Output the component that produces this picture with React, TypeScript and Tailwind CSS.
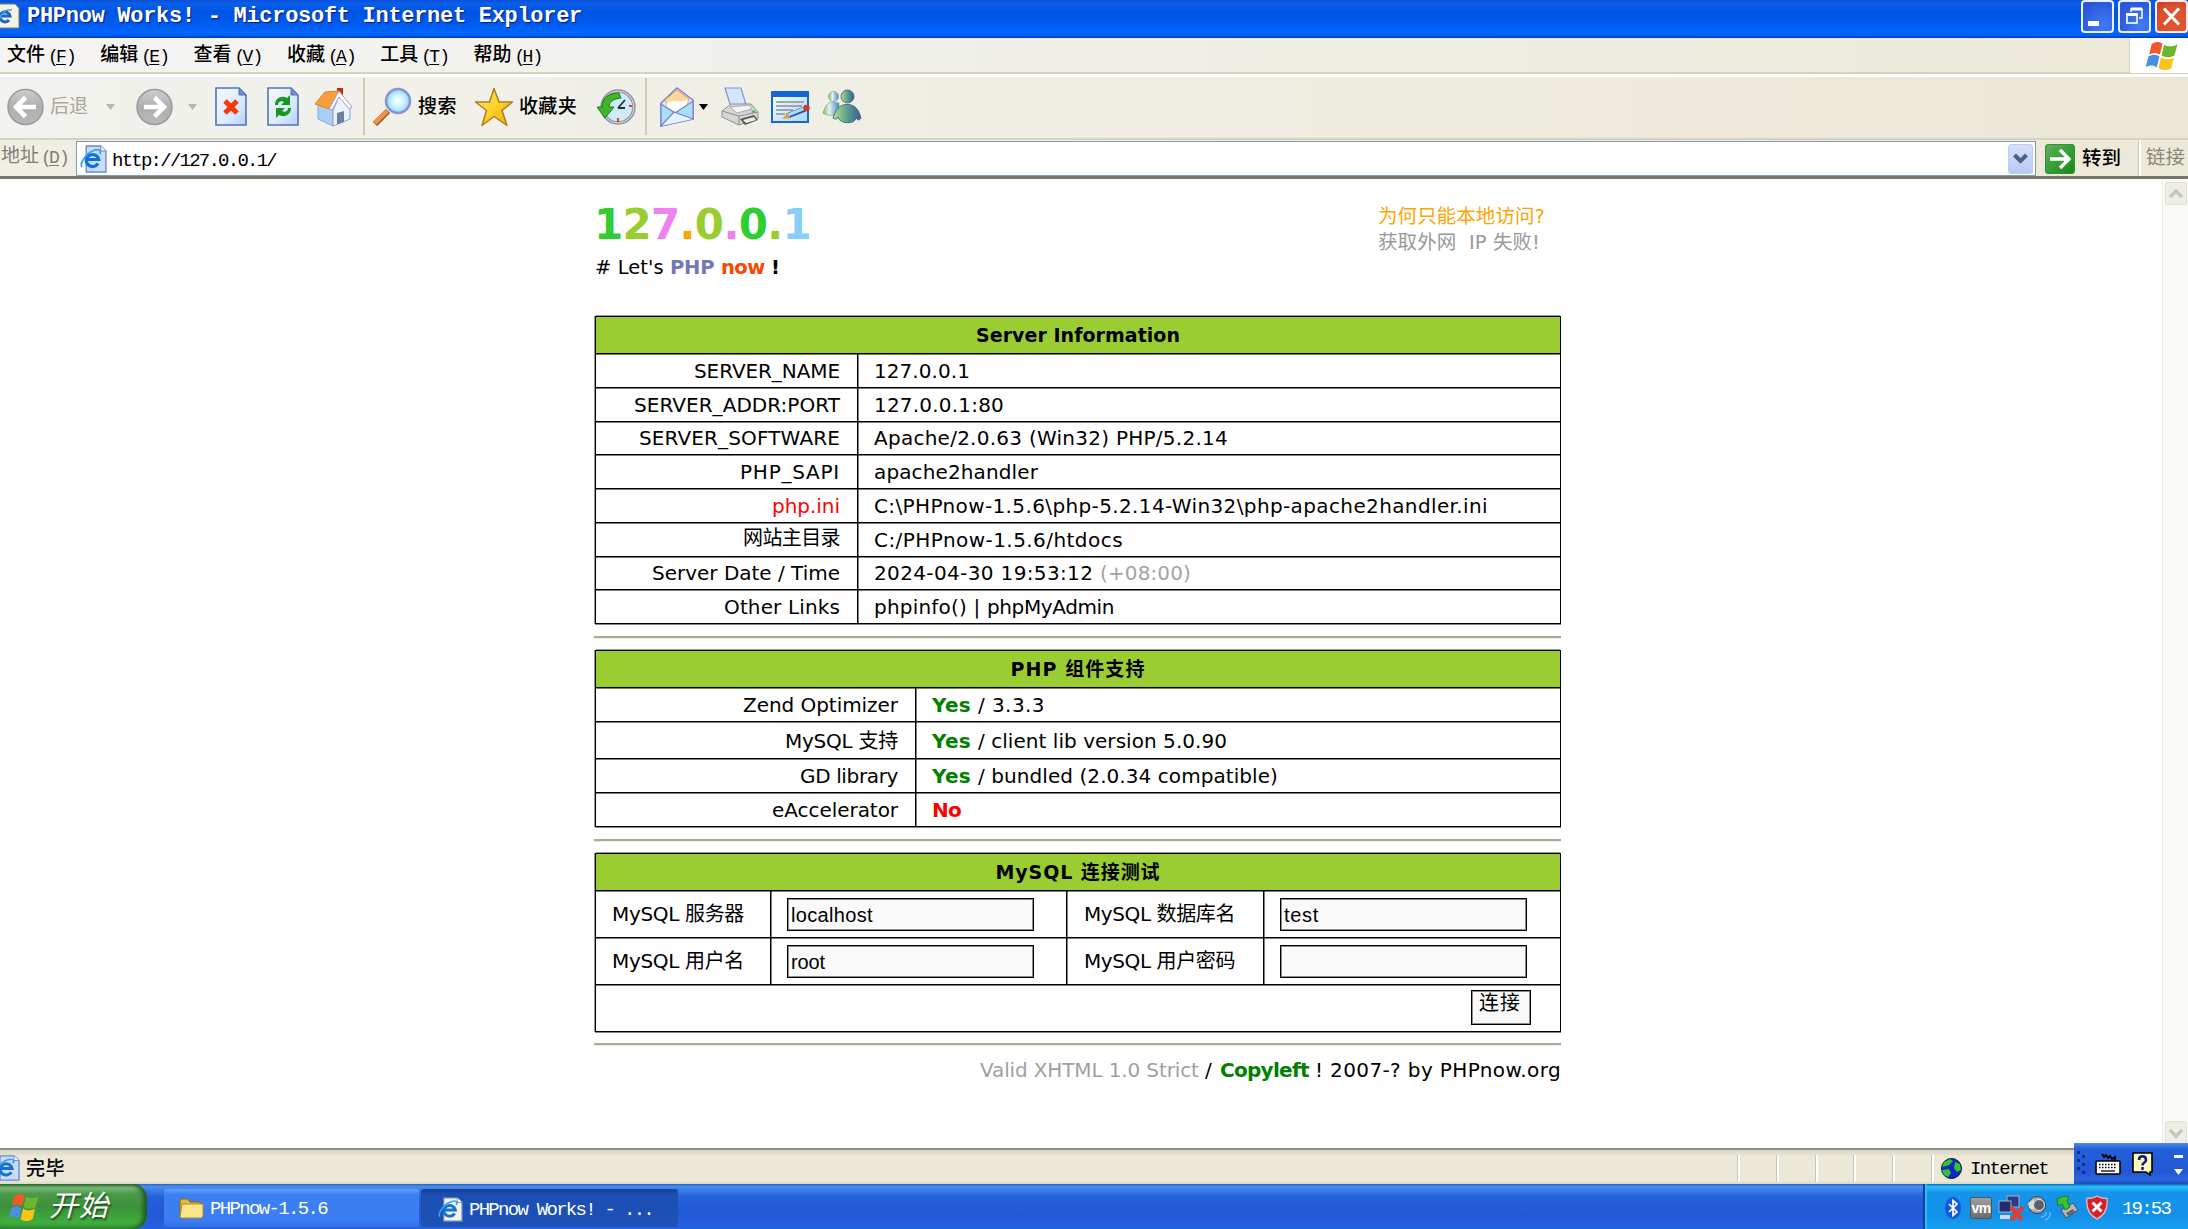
import React, { useLayoutEffect, useRef } from "react";

const SANS = "font-['DejaVu_Sans','Noto_Sans_CJK_SC',sans-serif]";
const MONO = "font-['Liberation_Mono','Noto_Sans_CJK_SC',monospace]";

/** Inline text tracked so that it fills exactly `w` pixels. */
function T({ w, className = "", children }: { w: number; className?: string; children: React.ReactNode }) {
  const ref = useRef<HTMLSpanElement>(null);
  useLayoutEffect(() => {
    const el = ref.current;
    if (!el) return;
    el.style.letterSpacing = "0px";
    const n = (el.textContent || "").length || 1;
    el.style.letterSpacing = `${(w - el.getBoundingClientRect().width) / n}px`;
  }, [w]);
  return (
    <span ref={ref} className={`inline-block whitespace-pre leading-none shrink-0 ${className}`}>
      {children}
    </span>
  );
}

const Flag = ({ className }: { className: string }) => (
  <svg className={className} viewBox="0 0 32 28" preserveAspectRatio="none">
    <path d="M6.5 3C10 0 14 .5 17 2.500L14.500 13C11 11 7.500 11 4 13Z" fill="#f0592a" />
    <path d="M18.500 3.500C22 5.500 27 6 31.500 3.200L28.500 14C24.500 16.500 20 16 16 14Z" fill="#6cb52d" />
    <path d="M3.500 14.800C7 12.500 11 12.800 14 14.800L11.500 25.500C8 23 4 23 .5 25Z" fill="#4a90e0" />
    <path d="M15.500 15.600C19 18 24 18.300 28 15.600L25.500 26C21.500 29 17 28.500 13 26.200Z" fill="#fbc21a" />
  </svg>
);

const IE = ({ className, page = "#c9dcfb" }: { className: string; page?: string }) => (
  <svg className={className} viewBox="0 0 26 28" preserveAspectRatio="none">
    <path d="M6 1H20L25 6V27H6Z" fill={page} stroke="#6f86c4" strokeWidth="1.3" />
    <path d="M20 1V6H25" fill="#fff" stroke="#6f86c4" />
    <path d="M17.300 18.500A6 6 0 1 1 18 14.500H7" fill="none" stroke="#1272d8" strokeWidth="3.200" />
    <path d="M2 22C-1 19 6 8 13 5.500C18 3.500 21 5 19 9" fill="none" stroke="#3aa0ee" strokeWidth="1.700" />
  </svg>
);

function TitleBar() {
  const box = "w-[33px] h-[33px] rounded-[4px] border-2 border-white/90 flex items-center justify-center";
  return (
    <div className="h-[38px] shrink-0 flex items-start bg-[linear-gradient(180deg,#0a50d8_0%,#0a5fe8_10%,#0054e3_30%,#0058ea_55%,#0066ff_85%,#0060f4_93%,#0036c0_100%)]">
      <svg className="w-[20px] h-[26px] mt-[3px]" viewBox="0 0 20 26">
        <path d="M-2 1H15L19 5V25H-2Z" fill="#f4f2e6" stroke="#7b7a6c" />
        <path d="M9 17A5 5 0 1 1 10 13H1" fill="none" stroke="#1e62c8" strokeWidth="3" />
        <path d="M-1 18C1 10 6 6 12 7" fill="none" stroke="#48a8e8" strokeWidth="1.500" />
      </svg>
      <div className={`${MONO} text-white font-bold text-[22px] leading-none ml-[7px] mt-[6px] [text-shadow:1px_1px_1px_#0a1883]`}>
        <T w={555}>PHPnow Works! - Microsoft Internet Explorer</T>
      </div>
      <div className="ml-auto flex gap-[4px]">
        <div className={`${box} bg-[radial-gradient(circle_at_70%_80%,#3f7cf8,#2a56d8_80%)]`}>
          <div className="w-[11px] h-[5px] bg-white mt-[13px] -ml-[8px]" />
        </div>
        <div className={`${box} bg-[radial-gradient(circle_at_70%_80%,#3f7cf8,#2a56d8_80%)]`}>
          <svg className="w-[19px] h-[19px]" viewBox="0 0 19 19" fill="none" stroke="#fff">
            <path d="M6 5V2H17V11H14" strokeWidth="1.500" />
            <path d="M6 2H17" strokeWidth="3" />
            <rect x="2" y="7" width="10" height="9" strokeWidth="1.600" />
            <path d="M1.200 7.500H12.800" strokeWidth="3" />
          </svg>
        </div>
        <div className={`${box} bg-[radial-gradient(circle_at_70%_80%,#e2552c,#dd5030_60%,#c8401c)]`}>
          <svg className="w-[19px] h-[19px]" viewBox="0 0 19 19" stroke="#fff" strokeWidth="3">
            <path d="M2 1.500L17 17.500M17 1.500L2 17.500" />
          </svg>
        </div>
      </div>
    </div>
  );
}

const MENUS: [string, string][] = [
  ["文件", "F"], ["编辑", "E"], ["查看", "V"], ["收藏", "A"], ["工具", "T"], ["帮助", "H"],
];

function MenuBar() {
  return (
    <div className="h-[39px] shrink-0 flex bg-[linear-gradient(90deg,#f4f4f2_0%,#f1f1ee_30%,#ece9d8_100%)] border-b-[3px] border-white">
      <div className="flex-1 flex items-center pl-[7px] pt-[3px] border-b-2 border-[#d8d2bd] border-r">
        {MENUS.map(([t, k]) => (
          <div key={k} className={`${MONO} w-[93.300px] text-[19px] font-medium text-black flex items-center`}>
            <T w={38}>{t}</T>
            <span className="inline-flex ml-[3px] text-[18px] leading-none">
              <T w={8}>(</T>
              <T w={10} className="underline underline-offset-2">{k}</T>
              <T w={8}>)</T>
            </span>
          </div>
        ))}
      </div>
      <div className="w-[58px] bg-white border-b border-[#d8d2bd] flex items-center pl-[15px]">
        <Flag className="w-[33px] h-[29px]" />
      </div>
    </div>
  );
}

const Circle = ({ flip = false }: { flip?: boolean }) => (
  <svg className={flip ? "w-[37px] h-[38px] shrink-0 -scale-x-100" : "w-[37px] h-[38px] shrink-0"} viewBox="0 0 37 38">
    <defs>
      <linearGradient id="cg" x1="0" y1="0" x2="0" y2="1">
        <stop offset="0" stopColor="#cfcfcf" /><stop offset=".5" stopColor="#aeaeae" /><stop offset="1" stopColor="#b9b9b9" />
      </linearGradient>
    </defs>
    <circle cx="18.500" cy="19" r="17.500" fill="url(#cg)" stroke="#9b9b9b" strokeWidth="1.500" />
    <path d="M29 19H9M18.500 9.500L9 19L18.500 28.500" fill="none" stroke="#fff" strokeWidth="4.600" />
  </svg>
);

const Tri = ({ className, fill }: { className: string; fill: string }) => (
  <svg className={`w-[9px] h-[6px] shrink-0 ${className}`} viewBox="0 0 9 6"><path d="M0 0H9L4.500 6Z" fill={fill} /></svg>
);

const Page = ({ children, className }: { children: React.ReactNode; className: string }) => (
  <svg className={`w-[32px] h-[39px] shrink-0 ${className}`} viewBox="0 0 32 39">
    <defs>
      <linearGradient id="pg" x1="0" y1="0" x2="1" y2="1">
        <stop offset="0" stopColor="#f4f9ff" /><stop offset=".6" stopColor="#dceafd" /><stop offset="1" stopColor="#b4cffa" />
      </linearGradient>
    </defs>
    <path d="M1 1H24L31 8V38H1Z" fill="url(#pg)" stroke="#5672b8" strokeWidth="1.600" />
    <path d="M24 1V8H31Z" fill="#6b8fd4" stroke="#5672b8" />
    {children}
  </svg>
);

function Toolbar() {
  return (
    <div className="h-[63px] shrink-0 flex items-center pl-[7px] pb-[2px] border-b-2 border-[#d8d2bd] bg-[linear-gradient(90deg,#f2f2ee_0%,#f0efe6_35%,#ece8d6_100%)]">
      <Circle />
      <div className={`${SANS} text-[19px] text-[#aaa797] ml-[6px]`}><T w={38}>后退</T></div>
      <Tri className="ml-[18px]" fill="#b9b7a8" />
      <div className="ml-[21px]"><Circle flip /></div>
      <Tri className="ml-[15px]" fill="#b9b7a8" />
      <Page className="ml-[18px]">
        <path d="M10 14L22 26M22 14L10 26" stroke="#f4380c" strokeWidth="5" />
      </Page>
      <Page className="ml-[20px]">
        <path d="M8 18C8 11 15 8 20 11L23 8V18H14L17 15C14 13 11 15 11 18Z" fill="#119a1d" />
        <path d="M24 21C24 28 17 31 12 28L9 31V21H18L15 24C18 26 21 24 21 21Z" fill="#119a1d" />
      </Page>
      <svg className="w-[38px] h-[40px] ml-[15px] shrink-0" viewBox="0 0 38 40">
        <path d="M23 1H29V12L23 8Z" fill="#c22f16" />
        <path d="M4 18L25 6L36 20V32L19 39L4 32Z" fill="#edf4ff" />
        <path d="M4 17L19 23V39L4 32Z" fill="#a8d0f4" stroke="#88a8d4" />
        <path d="M19 24L25 9L36 21V32L19 39Z" fill="#edf4ff" stroke="#8c9ed0" />
        <path d="M23 26L30 24V35L23 37.500Z" fill="#6d7fa8" />
        <path d="M11 5L25 4L15 22L1 17Z" fill="#fa9d3c" stroke="#dd8427" />
        <path d="M25 4L38 20L35 22L25 10L18 23L15 22Z" fill="#fff" stroke="#a8a0c0" />
      </svg>
      <div className="w-[2px] h-[57px] bg-[#cfcab2] ml-[11px] shrink-0" />
      <svg className="w-[39px] h-[39px] ml-[8px] shrink-0" viewBox="0 0 39 39">
        <defs>
          <radialGradient id="lens"><stop offset="0" stopColor="#fff" /><stop offset=".6" stopColor="#c4eefd" /><stop offset="1" stopColor="#8fd0f6" /></radialGradient>
        </defs>
        <path d="M2 37L15 24" stroke="#9c5a34" strokeWidth="6" />
        <path d="M2 36L14 24" stroke="#f2954a" strokeWidth="4" />
        <circle cx="25" cy="14" r="12" fill="url(#lens)" stroke="#8396d2" strokeWidth="2.500" />
      </svg>
      <div className={`${SANS} text-[19px] text-black ml-[6px] font-medium`}><T w={39}>搜索</T></div>
      <svg className="w-[40px] h-[40px] ml-[17px] shrink-0" viewBox="0 0 40 40">
        <defs>
          <linearGradient id="sg" x1="0" y1="0" x2="1" y2="1"><stop offset="0" stopColor="#ffe97a" /><stop offset=".5" stopColor="#fcd32c" /><stop offset="1" stopColor="#f3a70c" /></linearGradient>
        </defs>
        <path d="M20 1.500L25 15H38.500L28 23.500L33 38.500L20 29.500L8 38.500L12.500 23.500L1.500 15H15.500Z" fill="url(#sg)" stroke="#b07d1c" strokeWidth="1.500" strokeLinejoin="round" />
      </svg>
      <div className={`${SANS} text-[19px] text-black ml-[5px] font-medium`}><T w={58}>收藏夹</T></div>
      <svg className="w-[40px] h-[38px] ml-[19px] shrink-0" viewBox="0 0 40 38">
        <circle cx="22" cy="19" r="16" fill="#cfeafb" stroke="#92959c" strokeWidth="3.500" />
        <circle cx="22" cy="19" r="16" fill="none" stroke="#d9dce2" strokeWidth="1" />
        <path d="M22 20L29 12M22 20H29" stroke="#233" strokeWidth="1.800" />
        <path d="M22 30V34M33 18H36" stroke="#e0442c" strokeWidth="2.200" />
        <path d="M23 5C12 5 6 10 6 19H1L9 30L18 19H13C13 14 17 11 25 10Z" fill="#3eb52b" stroke="#1d7d16" />
      </svg>
      <div className="w-[2px] h-[57px] bg-[#cfcab2] ml-[9px] shrink-0" />
      <svg className="w-[34px] h-[40px] ml-[13px] shrink-0" viewBox="0 0 34 40">
        <path d="M1 16L17 1L33 13V32L1 39Z" fill="#d8e8fc" stroke="#8080cc" strokeWidth="1.500" />
        <path d="M5 13L17 3L29 12L26 20L8 21Z" fill="#fbd79a" stroke="#e0a860" />
        <path d="M7 16C13 12 20 16 28 13L26 21L16 25L7 20Z" fill="#fff" />
        <path d="M1 17L15 26L33 14V32L1 39Z" fill="#a7e0fb" stroke="#8080cc" strokeWidth="1.200" />
        <path d="M1 39L14 25L33 32" fill="#e4f3ff" stroke="#8080cc" strokeWidth="1.200" />
      </svg>
      <Tri className="ml-[5px]" fill="#000" />
      <svg className="w-[38px] h-[39px] ml-[13px] shrink-0" viewBox="0 0 38 39">
        <path d="M4 1H20L25 18L10 20Z" fill="#d4e6fd" stroke="#8090cc" strokeWidth="1.200" />
        <path d="M1 24L10 17L30 17L37 25V31L18 38L1 30Z" fill="#d6d6d6" stroke="#8f8f8f" />
        <path d="M1 24L18 29L37 25M18 29V38" fill="none" stroke="#8f8f8f" />
        <path d="M9 20L28 18L31 22L16 26Z" fill="#f4f4f4" stroke="#a8a8a8" />
        <path d="M19 32L33 28L37 33L24 38Z" fill="#555" />
        <path d="M22 33L33 30L35 33L25 36Z" fill="#eee" />
        <path d="M31 25L34 24" stroke="#4b4" strokeWidth="2" />
      </svg>
      <svg className="w-[39px] h-[32px] ml-[12px] shrink-0" viewBox="0 0 39 32">
        <defs><linearGradient id="ed" x1="0" y1="0" x2="1" y2="1"><stop offset="0" stopColor="#fff" /><stop offset="1" stopColor="#a8d6fa" /></linearGradient></defs>
        <rect x="1" y="1" width="36" height="30" fill="url(#ed)" stroke="#1668cc" strokeWidth="2" />
        <rect x="0" y="0" width="38" height="6" fill="#1466d4" />
        <path d="M5 11H33M5 15H31M5 19H22M5 23H14" stroke="#8a8f98" strokeWidth="1.400" />
        <path d="M16 25L34 18" stroke="#2254a8" strokeWidth="5.500" />
        <path d="M17 24L33 17.500" stroke="#a8d8fa" strokeWidth="3" />
        <path d="M11 28L17 21.500L19 27Z" fill="#d9a23c" />
        <circle cx="35.500" cy="17" r="3.200" fill="#d43a24" />
      </svg>
      <svg className="w-[40px] h-[35px] ml-[12px] shrink-0" viewBox="0 0 40 35">
        <defs>
          <linearGradient id="m1"><stop offset="0" stopColor="#b9dd8c" /><stop offset=".5" stopColor="#5d9f8a" /><stop offset="1" stopColor="#3d5c9c" /></linearGradient>
          <linearGradient id="m2"><stop offset="0" stopColor="#8cc04c" /><stop offset=".4" stopColor="#e0f0f4" /><stop offset="1" stopColor="#4a88c8" /></linearGradient>
        </defs>
        <circle cx="11.500" cy="7.500" r="5" fill="url(#m2)" stroke="#6a9a70" strokeWidth=".6" />
        <path d="M11 13C5 13 3 18 1 24C5 27 12 27 17 25V14Z" fill="url(#m2)" stroke="#6a9a70" strokeWidth=".6" />
        <circle cx="25.500" cy="7.500" r="6.500" fill="url(#m1)" stroke="#35607c" strokeWidth=".8" />
        <path d="M25 15.500C17 15 13 22 11 29C14 31 15 30 16 28C17 35 33 36 34 29C36 32 38 31 39 29C37 21 33 15 25 15.500Z" fill="url(#m1)" stroke="#35607c" strokeWidth=".8" />
      </svg>
    </div>
  );
}

function AddressBar() {
  return (
    <div className="h-[39px] shrink-0 flex items-start pl-[1px] bg-[linear-gradient(90deg,#f0efe6_0%,#ece9d8_100%)] border-b-[3px] border-[#77756a]">
      <div className={`${MONO} text-[19px] text-[#807e73] flex items-center w-[75px] h-[35px] shrink-0`}>
        <T w={38}>地址</T>
        <span className="inline-flex ml-[2px] text-[18px]">
          <T w={8}>(</T><T w={10} className="underline underline-offset-2">D</T><T w={8}>)</T>
        </span>
      </div>
      <div className="w-[1960px] h-[35px] mt-[1px] shrink-0 bg-white border border-[#7f9db9] flex items-center pl-[3px] pr-[2px]">
        <IE className="w-[27px] h-[28px]" />
        <div className={`${MONO} text-[19px] text-black ml-[5px] mt-[5px]`}><T w={164}>http://127.0.0.1/</T></div>
        <div className="ml-auto w-[25px] h-[30px] rounded-[3px] bg-[linear-gradient(180deg,#d4e0fc,#b6cbf6)] border border-[#bccdf2] flex items-center justify-center">
          <svg className="w-[15px] h-[11px]" viewBox="0 0 15 11" fill="none" stroke="#4d6185" strokeWidth="4"><path d="M1.500 2L7.500 8L13.500 2" /></svg>
        </div>
      </div>
      <svg className="w-[30px] h-[30px] ml-[9px] mt-[4px] shrink-0" viewBox="0 0 30 30">
        <defs><linearGradient id="go" x1="0" y1="0" x2="1" y2="1"><stop offset="0" stopColor="#5cb35a" /><stop offset="1" stopColor="#128a12" /></linearGradient></defs>
        <rect x=".5" y=".5" width="29" height="29" rx="2.500" fill="url(#go)" stroke="#3c8a46" />
        <path d="M5 15H23M15 6L24 15L15 24" fill="none" stroke="#fff" strokeWidth="3.400" />
      </svg>
      <div className={`${SANS} text-[19.500px] text-black font-medium ml-[7px] mt-[9px] leading-none`}><T w={39}>转到</T></div>
      <div className="w-[3px] h-[36px] bg-white border-l border-[#d0cab4] ml-[17px] shrink-0" />
      <div className={`${SANS} text-[19.500px] text-[#8a887c] ml-[5px] mt-[8px] leading-none`}><T w={39}>链接</T></div>
    </div>
  );
}

const LINE_T = "border-t border-black shadow-[inset_0_1px_0_#00000080]";
const LINE_L = "border-l border-black shadow-[inset_1px_0_0_#00000080]";

const Frame = ({ children, className }: { children: React.ReactNode; className: string }) => (
  <div className={`w-[966px] ml-px flex flex-col border-b border-x border-black shadow-[0_1px_0_#00000077,-1px_0_0_#00000066] ${className}`}>{children}</div>
);

const Head = ({ w, children }: { w: number; children: React.ReactNode }) => (
  <div className={`h-[37px] shrink-0 bg-[#9acd32] font-bold text-[19px] flex items-center justify-center pt-[1px] border-t border-black shadow-[0_-1px_0_#00000066]`}>
    <T w={w}>{children}</T>
  </div>
);

const Hr = ({ className }: { className: string }) => (
  <div className={`w-[967px] h-[3px] border-t-2 border-[#aca899] bg-[#efecdc] ${className}`} />
);

interface Item { k: string; kw: number; v: React.ReactNode; h?: string; kc?: string }

const SERVER: Item[] = [
  { k: "SERVER_NAME", kw: 146, v: <T w={96}>127.0.0.1</T> },
  { k: "SERVER_ADDR:PORT", kw: 206, v: <T w={130}>127.0.0.1:80</T> },
  { k: "SERVER_SOFTWARE", kw: 201, v: <T w={354}>Apache/2.0.63 (Win32) PHP/5.2.14</T> },
  { k: "PHP_SAPI", kw: 100, v: <T w={164}>apache2handler</T> },
  { k: "php.ini", kw: 68, kc: "text-[#ff0000]", v: <T w={614}>{"C:\\PHPnow-1.5.6\\php-5.2.14-Win32\\php-apache2handler.ini"}</T> },
  { k: "网站主目录", kw: 97, kc: "-mt-[4px]", v: <T w={249}>C:/PHPnow-1.5.6/htdocs</T> },
  { k: "Server Date / Time", kw: 188, v: <><T w={226}>2024-04-30 19:53:12 </T><T w={91} className="text-[#a3a3a3]">(+08:00)</T></> },
  { k: "Other Links", kw: 116, v: <><T w={113}>phpinfo() | </T><T w={127}>phpMyAdmin</T></> },
];

const Yes = () => <T w={46} className="font-bold text-[#008000]">Yes </T>;

const PARTS: Item[] = [
  { k: "Zend Optimizer", kw: 155, v: <><Yes /><T w={67}>/ 3.3.3</T></>, h: "h-[34px]" },
  { k: "MySQL 支持", kw: 113, v: <><Yes /><T w={249}>/ client lib version 5.0.90</T></>, h: "h-[37px]" },
  { k: "GD library", kw: 98, v: <><Yes /><T w={300}>/ bundled (2.0.34 compatible)</T></>, h: "h-[34px]" },
  { k: "eAccelerator", kw: 126, v: <T w={29} className="font-bold text-[#ff0000]">No</T>, h: "h-[34px]" },
];

const Rows = ({ items, kcol }: { items: Item[]; kcol: string }) => (
  <>
    {items.map((r) => (
      <div key={r.k} className={`flex ${r.h || "flex-1"} ${LINE_T}`}>
        <div className={`${kcol} flex items-center justify-end pr-[17px] pt-[1px]`}>
          <T w={r.kw} className={r.kc}>{r.k}</T>
        </div>
        <div className={`flex-1 flex items-center pl-[16px] pt-[1px] ${LINE_L}`}>{r.v}</div>
      </div>
    ))}
  </>
);

function FormRow({ cells }: { cells: [string, number, string, number][] }) {
  return (
    <div className={`flex h-[47px] ${LINE_T}`}>
      {cells.map(([label, lw, val, vw], i) => (
        <React.Fragment key={label}>
          <div className={i ? `w-[197px] pl-[17px] flex items-center ${LINE_L}` : "w-[174px] pl-[16px] flex items-center"}>
            <T w={lw}>{label}</T>
          </div>
          <div className={`${i ? "flex-1" : "w-[296px]"} pl-[16px] flex items-center ${LINE_L}`}>
            <div className="w-[247px] h-[33px] bg-[#fafafa] border border-black shadow-[inset_0_0_0_1px_#00000070] flex items-center pl-[3px] pt-[2px] text-[20px] font-['Liberation_Sans',sans-serif]">
              {val && <T w={vw}>{val}</T>}
            </div>
          </div>
        </React.Fragment>
      ))}
    </div>
  );
}

const IP: [string, string][] = [
  ["1", "text-[#32cd32]"], ["2", "text-[#9acd32]"], ["7", "text-[#ee82ee]"], [".", "text-[#ffa500]"],
  ["0", "text-[#9acd32]"], [".", "text-[#ee82ee]"], ["0", "text-[#32cd32]"], [".", "text-[#9acd32]"], ["1", "text-[#87cefa]"],
];

function Content() {
  return (
    <div className="flex-1 min-h-0 flex bg-white">
      <div className={`flex-1 pl-[594px] ${SANS} text-[20px] text-black`}>
        <div className="w-[967px] h-[137px] flex justify-between">
          <div className="pt-[25px]">
            <h1 className="text-[42px] font-bold leading-none">
              <T w={217}>{IP.map(([c, cl], i) => <span key={i} className={cl}>{c}</span>)}</T>
            </h1>
            <div className="mt-[7px] text-[19.500px] pl-[1px]">
              <T w={75}># Let's </T><T w={51} className="font-bold text-[#7377b5]">PHP </T><T w={50} className="font-bold text-[#ff4500]">now </T><T w={8} className="font-bold">!</T>
            </div>
          </div>
          <div className="w-[183px] pt-[28px] text-[19.500px] flex flex-col items-start gap-[6px]">
            <T w={167} className="text-[#ffa500]">为何只能本地访问?</T>
            <T w={162} className="text-[#999999]">获取外网  IP 失败!</T>
          </div>
        </div>
        <Frame className="h-[308px]">
          <Head w={204}>Server Information</Head>
          <Rows items={SERVER} kcol="w-[261px]" />
        </Frame>
        <Hr className="mt-[12px]" />
        <Frame className="mt-[11px]">
          <Head w={135}>PHP 组件支持</Head>
          <Rows items={PARTS} kcol="w-[319px]" />
        </Frame>
        <Hr className="mt-[12px]" />
        <Frame className="mt-[11px]">
          <Head w={165}>MySQL 连接测试</Head>
          <FormRow cells={[["MySQL 服务器", 132, "localhost", 82], ["MySQL 数据库名", 151, "test", 35]]} />
          <FormRow cells={[["MySQL 用户名", 132, "root", 34], ["MySQL 用户密码", 151, "", 0]]} />
          <div className={`h-[47px] flex justify-end pr-[29px] pt-[5px] ${LINE_T}`}>
            <div className="w-[60px] h-[35px] bg-[#fafafa] border border-black shadow-[inset_0_0_0_1px_#00000070] pl-[7px] pt-[2px] leading-none">
              <T w={42}>连接</T>
            </div>
          </div>
        </Frame>
        <Hr className="mt-[11px]" />
        <div className="w-[967px] flex justify-end mt-[14px]">
          <T w={225} className="text-[#a0a0a0]">Valid XHTML 1.0 Strict </T>
          <T w={15}>/ </T>
          <T w={95} className="font-bold text-[#008000]">Copyleft </T>
          <T w={246}>! 2007-? by PHPnow.org</T>
        </div>
      </div>
      <div className="w-[26px] shrink-0 bg-[#fafaf6] border-l border-[#eeede5] flex flex-col justify-between items-center pt-[3px] pb-[4px]">
        {["M2 9L8 3L14 9", "M2 3L8 9L14 3"].map((d) => (
          <div key={d} className="w-[22px] h-[23px] rounded-[2px] bg-[#efeee6] border border-[#e2e1d6] flex items-center justify-center">
            <svg className="w-[16px] h-[12px]" viewBox="0 0 16 12" fill="none" stroke="#c8c7bd" strokeWidth="3.500"><path d={d} /></svg>
          </div>
        ))}
      </div>
    </div>
  );
}

function StatusBar() {
  return (
    <div className="h-[36px] shrink-0 relative flex items-center bg-[linear-gradient(180deg,#d8d4c4_0%,#ece9d8_20%,#ebe8d7_90%,#dcd8c6_100%)] border-t-2 border-[#918f84]">
      <IE className="w-[26px] h-[26px] -ml-[6px] mt-[2px]" />
      <div className={`${SANS} text-[19px] font-medium text-black ml-[6px] mt-[2px]`}><T w={39}>完毕</T></div>
      <div className="ml-auto flex h-[27px] mr-[114px] mt-[2px]">
        {[0, 1, 2, 3, 4].map((i) => <div key={i} className="w-[38.800px] border-l border-[#c9c5b2] shadow-[inset_2px_0_0_#fff]" />)}
        <div className="w-[143px] border-l border-[#c9c5b2] shadow-[inset_2px_0_0_#fff] flex items-center pl-[9px]">
          <svg className="w-[21px] h-[21px]" viewBox="0 0 21 21">
            <circle cx="10.500" cy="10.500" r="10" fill="#1028c8" stroke="#061038" />
            <path d="M3 4L9 1L12 3L8 7L5 8L1 9ZM14 4L19 6L20 12L16 14L13 10ZM1 12L8 11L10 15L7 19L3 17Z" fill="#35c42c" />
          </svg>
          <div className={`${MONO} text-[19px] text-black ml-[8px] pt-[2px]`}><T w={78}>Internet</T></div>
        </div>
      </div>
      <div className="absolute right-0 -top-[7px] w-[114px] h-[41px] bg-[linear-gradient(180deg,#4a8ef0_0%,#2460dc_14%,#2257d2_70%,#2a66e0_90%,#1c4cba_100%)] flex items-center">
        <svg className="w-[10px] h-[28px] ml-[2px]" viewBox="0 0 10 28" fill="#0c2d8c">
          <path d="M1 1h3v3h-3zM6 5h3v3h-3zM1 9h3v3h-3zM6 13h3v3h-3zM1 17h3v3h-3zM6 21h3v3h-3z" />
        </svg>
        <svg className="w-[26px] h-[24px] ml-[9px]" viewBox="0 0 26 24">
          <path d="M7 2L9 5L11 3L13 6L15 4L17 7L20 5V9" fill="none" stroke="#000" strokeWidth="1.800" />
          <rect x="1" y="9" width="24" height="13" rx="1" fill="#fff" stroke="#000" strokeWidth="1.600" />
          <path d="M4 12.500H22M4 15.500H22" stroke="#000" strokeWidth="1.300" strokeDasharray="1.500 1.500" />
          <path d="M6 19H20" stroke="#000" strokeWidth="1.300" />
        </svg>
        <svg className="w-[22px] h-[24px] ml-[11px]" viewBox="0 0 22 24">
          <path d="M1 1H20V20H18V23L14 20H1Z" fill="#fdfbb8" stroke="#000" strokeWidth="1.600" />
          <path d="M7 8C7 3 14 3 14 8C14 11 10.500 10 10.500 13.500M10.500 15V18" fill="none" stroke="#10188c" strokeWidth="2.500" />
        </svg>
        <div className="ml-auto mr-[5px] flex flex-col items-center gap-[11px] pt-[2px]">
          <div className="w-[9px] h-[3px] bg-white" />
          <Tri className="" fill="#fff" />
        </div>
      </div>
    </div>
  );
}

function Taskbar() {
  return (
    <div className="h-[45px] shrink-0 flex bg-[linear-gradient(180deg,#2a62c8_0%,#4a90ee_6%,#3c80e8_12%,#2460da_30%,#2358d6_70%,#2663e0_100%)]">
      <div className="w-[147px] rounded-r-[14px] bg-[linear-gradient(180deg,#2f7a30_0%,#7db87c_8%,#4a9a48_22%,#3c923a_50%,#3fae3c_85%,#389a36_100%)] shadow-[inset_-4px_0_5px_#1c5c20] flex items-center pl-[8px]">
        <Flag className="w-[31px] h-[28px]" />
        <div className={`${SANS} text-white italic text-[29px] ml-[10px] [text-shadow:1px_2px_2px_#1a4a1c]`}><T w={60}>开始</T></div>
      </div>
      <div className="mt-[5px] ml-[17px] w-[255px] h-[38px] rounded-[3px] bg-[linear-gradient(180deg,#62a0fa_0%,#3c81f3_15%,#3a7cf2_85%,#3270e0_100%)] flex items-center pl-[15px]">
        <svg className="w-[25px] h-[21px]" viewBox="0 0 25 21">
          <path d="M1 19V2L3 1H9L11 4H21V8" fill="#e8b53a" stroke="#8c6414" />
          <path d="M1 19L3 6H24V18L22 20H2Z" fill="#fbe58a" stroke="#b98a22" />
        </svg>
        <div className={`${MONO} text-[19px] text-white ml-[6px] mt-[2px]`}><T w={117}>PHPnow-1.5.6</T></div>
      </div>
      <div className="mt-[5px] ml-[2px] w-[257px] h-[38px] rounded-[3px] bg-[linear-gradient(180deg,#163f94_0%,#1c4eb4_15%,#1e52b7_100%)] flex items-center pl-[17px] pt-[2px]">
        <IE className="w-[25px] h-[25px]" page="#f6f4e8" />
        <div className={`${MONO} text-[19px] text-white ml-[6px] mt-[3px]`}><T w={184}>PHPnow Works! - ...</T></div>
      </div>
      <div className="ml-auto w-[265px] flex items-center pl-[20px] pt-[2px] border-l-2 border-[#0f3c9c] bg-[linear-gradient(180deg,#0c59b9_0%,#2cc0f8_6%,#1594ea_18%,#1290e8_70%,#18a0f2_100%)] shadow-[inset_2px_0_1px_#22c4f8]">
        <svg className="w-[16px] h-[22px]" viewBox="0 0 16 22">
          <ellipse cx="8" cy="11" rx="8" ry="11" fill="#1358d8" />
          <path d="M4 7L12 15L8 18.500V3.500L12 7L4 15" fill="none" stroke="#fff" strokeWidth="1.700" />
        </svg>
        <div className="w-[22px] h-[22px] ml-[9px] rounded-[2px] border border-[#555] bg-[linear-gradient(180deg,#a0a0a0,#6d6d6d)] text-white font-['Liberation_Sans'] font-bold text-[14px] flex items-center justify-center">
          <T w={19}>vm</T>
        </div>
        <svg className="w-[26px] h-[26px] ml-[6px]" viewBox="0 0 26 26">
          <rect x="9" y="1" width="12" height="11" fill="#2b3a84" stroke="#a8aed0" />
          <rect x="1" y="6" width="12" height="11" fill="#222c6c" stroke="#a8aed0" />
          <path d="M2 20H12V24H2Z" fill="#d4d8ea" />
          <path d="M13 12L24 25M25 12L13 25" stroke="#ec3a28" strokeWidth="4" />
        </svg>
        <svg className="w-[26px] h-[26px] ml-[2px]" viewBox="0 0 26 26">
          <circle cx="11" cy="10" r="8.500" fill="#a3a6ab" stroke="#3c4048" />
          <circle cx="13" cy="10" r="5.500" fill="#5c6068" stroke="#e4e6ea" />
          <path d="M2 8L8 4V15L3 13Z" fill="#dcdcdc" />
          <path d="M15 22C19 22 20 19 20 17M19 25C23 24 25 20 24 17" fill="none" stroke="#6cb0fc" strokeWidth="1.500" />
        </svg>
        <svg className="w-[24px] h-[25px] ml-[3px]" viewBox="0 0 24 25">
          <path d="M6 15L18 8L23 15L11 23Z" fill="#b4b6ba" stroke="#4a4c50" />
          <path d="M11 18L18 14L20 17L13 21Z" fill="#63666c" />
          <path d="M2 4L9 1L14 2L12 6L15 12L10 15L7 9L3 11Z" fill="#3fc038" stroke="#1a7a1c" />
        </svg>
        <svg className="w-[22px] h-[25px] ml-[7px]" viewBox="0 0 22 25">
          <path d="M11 1C14 3 18 3.500 21 3.500C22 13 19 20 11 24C3 20 0 13 1 3.500C4 3.500 8 3 11 1Z" fill="#d81e28" stroke="#dcb4b8" strokeWidth="1.400" />
          <path d="M6.500 7.500L15.500 16.500M15.500 7.500L6.500 16.500" stroke="#fff" strokeWidth="3" />
        </svg>
        <div className={`${MONO} text-[19px] text-white ml-[14px] mt-[3px]`}><T w={48}>19:53</T></div>
      </div>
    </div>
  );
}

export default function App() {
  return (
    <div className="w-[2188px] h-[1229px] overflow-hidden flex flex-col bg-white">
      <TitleBar />
      <MenuBar />
      <Toolbar />
      <AddressBar />
      <Content />
      <StatusBar />
      <Taskbar />
    </div>
  );
}
